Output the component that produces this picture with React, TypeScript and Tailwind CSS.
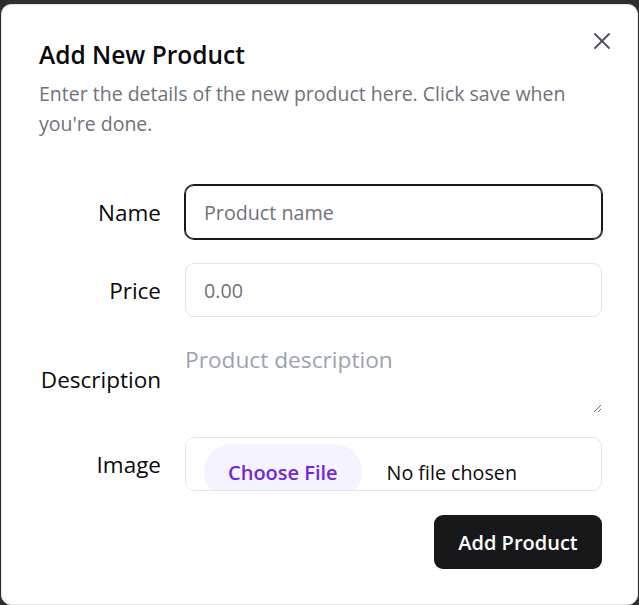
import { X } from "lucide-react";

function FieldLabel({ children, className = "" }: { children: string; className?: string }) {
  return <label className={`pt-[2px] text-right text-[22.5px] leading-[30px] text-[#09090b] ${className}`}>{children}</label>;
}

export default function App() {
  return (
    <div className="h-[605px] overflow-hidden bg-[#2e2e2e] pl-[1px] pt-[4px] font-['Open_Sans',sans-serif]">
      <div className="relative h-[601px] w-[637px] rounded-[10px] border border-[#e4e4e7] bg-white pl-[37px] pr-[35px] pt-[35px]">
        <button aria-label="Close" className="absolute right-[21px] top-[22px] flex size-[28px] items-center justify-center text-[#52525b]">
          <X size={28} strokeWidth={1.6} />
        </button>

        <div className="flex flex-col">
          <h2 className="text-[24.5px] font-semibold leading-[30px] text-[#09090b]">Add New Product</h2>
          <p className="mt-[9px] text-[19.5px] leading-[30px] text-[#71717a]">
            Enter the details of the new product here. Click save when you're done.
          </p>
        </div>

        <div className="mt-[46px] grid grid-cols-[122px_1fr] items-center gap-x-6 gap-y-6">
          <FieldLabel>Name</FieldLabel>
          <input
            placeholder="Product name"
            className="h-[54px] w-full rounded-[9px] border border-[#18181b] px-[18px] text-[19.7px] text-[#09090b] outline-none ring-1 ring-[#18181b] placeholder:text-[#71717a]"
          />

          <FieldLabel>Price</FieldLabel>
          <input
            placeholder="0.00"
            className="h-[54px] w-full rounded-[9px] border border-[#e4e4e7] px-[18px] text-[19.7px] text-[#09090b] outline-none placeholder:text-[#71717a]"
          />

          <FieldLabel className="mt-[4px]">Description</FieldLabel>
          <textarea
            placeholder="Product description"
            className="h-[72px] w-full resize-y bg-transparent pt-[4px] text-[22.7px] leading-[30px] text-[#09090b] outline-none placeholder:text-[#9ca3af]"
          />

          <FieldLabel>Image</FieldLabel>
          <div className="flex h-[54px] w-full items-start overflow-hidden rounded-[9px] border border-[#e4e4e7] pl-[18px] pt-[6px]">
            <span className="flex h-[56px] shrink-0 items-center rounded-full bg-[#f5f3ff] px-[24px] pt-[1px] text-[20px] font-semibold text-[#6d28d9]">
              Choose File
            </span>
            <span className="flex h-[56px] items-center pl-[25px] pt-[1px] text-[19.7px] text-[#09090b]">No file chosen</span>
          </div>
        </div>

        <div className="mt-6 flex justify-end">
          <button className="flex h-[54px] w-[168px] items-center justify-center rounded-[9px] bg-[#18181b] pt-[2px] text-[20px] font-semibold text-white">
            Add Product
          </button>
        </div>
      </div>
    </div>
  );
}
